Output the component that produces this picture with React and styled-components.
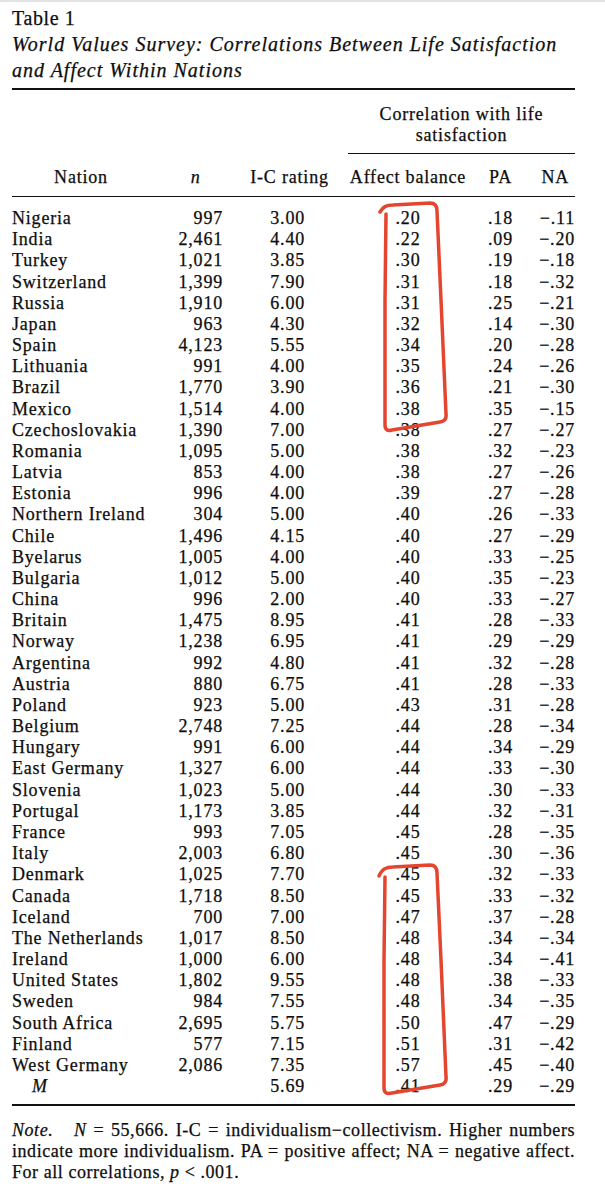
import React from 'react'
import styled, { createGlobalStyle } from 'styled-components'

const GlobalStyle = createGlobalStyle`
  html, body {
    margin: 0;
    padding: 0;
    background: #fff;
  }
`

const Page = styled.div`
  position: relative;
  box-sizing: border-box;
  width: 605px;
  min-height: 1200px;
  padding: 4px 30px 0 12px;
  border-top: 2px solid #e3e3e3;
  background: #fff;
  color: #0d0d0d;
  font-family: "Liberation Serif", "Times New Roman", serif;
  -webkit-text-stroke: 0.25px #0d0d0d;
`

const TableLabel = styled.div`
  font-size: 20px;
  line-height: 25px;
  letter-spacing: 0.6px;
`

const TableTitle = styled.div`
  margin-top: 1px;
  font-size: 20px;
  line-height: 25.5px;
  font-style: italic;
  letter-spacing: 1px;
  white-space: nowrap;
`

const Rule = styled.div`
  height: ${({ $thick }) => ($thick ? '2px' : '1.5px')};
  margin-top: ${({ $mt }) => $mt}px;
  background: #111;
`

const Grid = styled.div`
  display: grid;
  grid-template-columns: 138px 95px 103px 120px 65px 42px;
  font-size: 18px;
  letter-spacing: 0.8px;
  line-height: ${({ $lh }) => $lh || '21px'};
  margin-top: ${({ $mt }) => $mt || 0}px;
`

const SpanHeader = styled.div`
  grid-column: 4 / 7;
  text-align: center;
  padding-bottom: 7px;
  border-bottom: 1.5px solid #111;
`

const Cell = styled.div`
  text-align: ${({ $align }) => $align || 'left'};
  padding-right: ${({ $pr }) => $pr || 0}px;
  padding-left: ${({ $pl }) => $pl || 0}px;
  font-style: ${({ $italic }) => ($italic ? 'italic' : 'normal')};
  white-space: nowrap;
`

const Body = styled.div`
  padding-top: 11px;
`

const Note = styled.div`
  margin-top: 14px;
  font-size: 18px;
  line-height: 21px;
  letter-spacing: 0.55px;
`

const NoteLine = styled.div`
  white-space: nowrap;
  text-align: ${({ $last }) => ($last ? 'left' : 'justify')};
  text-align-last: ${({ $last }) => ($last ? 'left' : 'justify')};
`

const NoteLabel = styled.i`
  margin-right: 14px;
`

const Marks = styled.svg`
  position: absolute;
  top: -2px;
  left: 0;
  pointer-events: none;
  overflow: visible;
`

const rows = [
  ['Nigeria', '997', '3.00', '.20', '.18', '−.11'],
  ['India', '2,461', '4.40', '.22', '.09', '−.20'],
  ['Turkey', '1,021', '3.85', '.30', '.19', '−.18'],
  ['Switzerland', '1,399', '7.90', '.31', '.18', '−.32'],
  ['Russia', '1,910', '6.00', '.31', '.25', '−.21'],
  ['Japan', '963', '4.30', '.32', '.14', '−.30'],
  ['Spain', '4,123', '5.55', '.34', '.20', '−.28'],
  ['Lithuania', '991', '4.00', '.35', '.24', '−.26'],
  ['Brazil', '1,770', '3.90', '.36', '.21', '−.30'],
  ['Mexico', '1,514', '4.00', '.38', '.35', '−.15'],
  ['Czechoslovakia', '1,390', '7.00', '.38', '.27', '−.27'],
  ['Romania', '1,095', '5.00', '.38', '.32', '−.23'],
  ['Latvia', '853', '4.00', '.38', '.27', '−.26'],
  ['Estonia', '996', '4.00', '.39', '.27', '−.28'],
  ['Northern Ireland', '304', '5.00', '.40', '.26', '−.33'],
  ['Chile', '1,496', '4.15', '.40', '.27', '−.29'],
  ['Byelarus', '1,005', '4.00', '.40', '.33', '−.25'],
  ['Bulgaria', '1,012', '5.00', '.40', '.35', '−.23'],
  ['China', '996', '2.00', '.40', '.33', '−.27'],
  ['Britain', '1,475', '8.95', '.41', '.28', '−.33'],
  ['Norway', '1,238', '6.95', '.41', '.29', '−.29'],
  ['Argentina', '992', '4.80', '.41', '.32', '−.28'],
  ['Austria', '880', '6.75', '.41', '.28', '−.33'],
  ['Poland', '923', '5.00', '.43', '.31', '−.28'],
  ['Belgium', '2,748', '7.25', '.44', '.28', '−.34'],
  ['Hungary', '991', '6.00', '.44', '.34', '−.29'],
  ['East Germany', '1,327', '6.00', '.44', '.33', '−.30'],
  ['Slovenia', '1,023', '5.00', '.44', '.30', '−.33'],
  ['Portugal', '1,173', '3.85', '.44', '.32', '−.31'],
  ['France', '993', '7.05', '.45', '.28', '−.35'],
  ['Italy', '2,003', '6.80', '.45', '.30', '−.36'],
  ['Denmark', '1,025', '7.70', '.45', '.32', '−.33'],
  ['Canada', '1,718', '8.50', '.45', '.33', '−.32'],
  ['Iceland', '700', '7.00', '.47', '.37', '−.28'],
  ['The Netherlands', '1,017', '8.50', '.48', '.34', '−.34'],
  ['Ireland', '1,000', '6.00', '.48', '.34', '−.41'],
  ['United States', '1,802', '9.55', '.48', '.38', '−.33'],
  ['Sweden', '984', '7.55', '.48', '.34', '−.35'],
  ['South Africa', '2,695', '5.75', '.50', '.47', '−.29'],
  ['Finland', '577', '7.15', '.51', '.31', '−.42'],
  ['West Germany', '2,086', '7.35', '.57', '.45', '−.40'],
]

const DataRow = ({ cells, mean }) => (
  <>
    <Cell $italic={mean} $pl={mean ? 20 : 0}>{cells[0]}</Cell>
    <Cell $align='right' $pr={22}>{cells[1]}</Cell>
    <Cell $align='right' $pr={43}>{cells[2]}</Cell>
    <Cell $align='center'>{cells[3]}</Cell>
    <Cell $align='center'>{cells[4]}</Cell>
    <Cell $align='right'>{cells[5]}</Cell>
  </>
)

// hand-drawn red boxes around the low and high affect-balance values
const box1 = 'M380,212 C383,207 386,205 393,205 L430,203 Q437,203 437,211 L441,300 L446,414 Q447,421 440,422 L392,430 Q385,432 385,425 L385,300 L386,214'
const box2 = 'M379,876 C382,869 386,867 393,867 L430,865 Q437,865 437,873 L441,960 L446,1077 Q447,1084 440,1085 L392,1093 Q384,1095 384,1088 L384,960 L385,877'

const App = () => (
  <>
    <GlobalStyle />
    <Page>
      <TableLabel>Table 1</TableLabel>
      <TableTitle>
        World Values Survey: Correlations Between Life Satisfaction
        <br />
        and Affect Within Nations
      </TableTitle>
      <Rule $thick $mt={5} />

      <Grid $mt={14}>
        <SpanHeader>
          Correlation with life
          <br />
          satisfaction
        </SpanHeader>
      </Grid>

      <Grid $mt={13}>
        <Cell $align='center'>Nation</Cell>
        <Cell $align='right' $pr={44.5} $italic>n</Cell>
        <Cell $align='center' $pr={14}>I-C rating</Cell>
        <Cell $align='center'>Affect balance</Cell>
        <Cell $align='center'>PA</Cell>
        <Cell $align='right' $pr={6}>NA</Cell>
      </Grid>
      <Rule $mt={7.5} />

      <Body>
        <Grid $lh='21.17px'>
          {rows.map(r => (
            <DataRow key={r[0]} cells={r} />
          ))}
          <DataRow mean cells={['M', '', '5.69', '.41', '.29', '−.29']} />
        </Grid>
      </Body>
      <Rule $thick $mt={6.5} />

      <Note>
        <NoteLine>
          <NoteLabel>Note.</NoteLabel> <i>N</i> = 55,666. I-C = individualism−collectivism. Higher numbers
        </NoteLine>
        <NoteLine>
          indicate more individualism. PA = positive affect; NA = negative affect.
        </NoteLine>
        <NoteLine $last>
          For all correlations, <i>p</i> &lt; .001.
        </NoteLine>
      </Note>

      <Marks width='605' height='1200' viewBox='0 0 605 1200'>
        <g fill='none' stroke='#e4452f' strokeWidth='3.5' strokeLinecap='round' strokeLinejoin='round'>
          <path d={box1} />
          <path d={box2} />
        </g>
      </Marks>
    </Page>
  </>
)

export default App
